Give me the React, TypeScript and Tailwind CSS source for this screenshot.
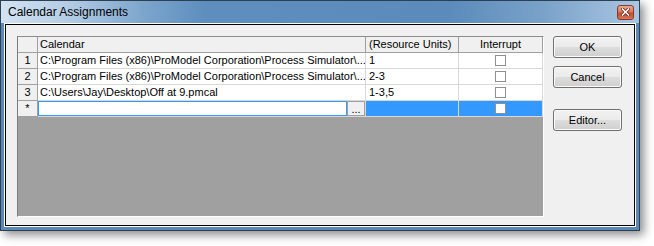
import { Fragment } from 'react';

const rows = [
  { num: '1', calendar: 'C:\\Program Files (x86)\\ProModel Corporation\\Process Simulator\\...', units: '1' },
  { num: '2', calendar: 'C:\\Program Files (x86)\\ProModel Corporation\\Process Simulator\\...', units: '2-3' },
  { num: '3', calendar: 'C:\\Users\\Jay\\Desktop\\Off at 9.pmcal', units: '1-3,5' },
];

const headCell = 'h-[16px] bg-[#f0f0f0] border-r border-b border-[#a0a0a0] leading-[15px] text-black';
const dataCell = 'h-[16px] bg-white border-r border-b border-[#d8d8d8] leading-[15px] text-black';

const CheckBox = () => (
  <div className="w-[11px] h-[11px] border border-[#8e8f8f] bg-white" />
);

const DialogButton = ({ label }: { label: string }) => (
  <button className="w-[69px] h-[22px] rounded-[3px] border border-[#707070] bg-[linear-gradient(to_bottom,#f2f2f2_0%,#ebebeb_48%,#dddddd_52%,#cfcfcf_100%)] shadow-[inset_0_0_0_1px_#fbfbfb] text-[11px] leading-[20px] text-black">
    {label}
  </button>
);

const CloseButton = () => (
  <div className="w-[17px] h-[15px] rounded-[3px] border border-[#8a3a28] bg-[linear-gradient(to_bottom,#e8a891_0%,#d87a5f_45%,#c44b2e_55%,#d8765a_100%)] flex items-center justify-center">
    <svg width="9" height="8" viewBox="0 0 9 8">
      <path d="M1.5 1 L7.5 7 M7.5 1 L1.5 7" stroke="#5a1c10" strokeWidth="3" strokeLinecap="square" />
      <path d="M1.5 1 L7.5 7 M7.5 1 L1.5 7" stroke="#ffffff" strokeWidth="1.6" strokeLinecap="square" />
    </svg>
  </div>
);

export default function App() {
  return (
    <div className="w-[654px] h-[246px] bg-white font-['Liberation_Sans',Arial,sans-serif]">
      <div className="w-[640px] h-[231px] border border-[#2e3f52] bg-[#5b89b7] shadow-[4px_4px_9px_rgba(0,0,0,0.45)] flex flex-col">
        {/* Title bar */}
        <div className="h-[22px] flex items-center justify-between pl-[7px] pr-[5px] bg-[linear-gradient(to_right,#d2e2f1_0%,#b5cee6_10%,#7ea6cd_22%,#5d8ebe_32%,#5a8bbb_70%,#7aa2c9_85%,#a9c6e2_100%)]">
          <span className="text-[12px] text-black leading-none">Calendar Assignments</span>
          <CloseButton />
        </div>

        {/* Frame */}
        <div className="flex-1 px-[3px] pb-[3px]">
          <div className="h-full border border-white">
            <div className="h-full border border-black bg-[#f0f0f0] flex pl-[11px] pt-[11px] pb-[8px] pr-[12px] gap-[9px]">
              {/* Grid */}
              <div className="w-[527px] h-[181px] border-t border-l border-t-[#8c8c8c] border-l-[#7a7a7a] border-b border-r border-b-white border-r-white bg-[#a0a0a0] text-[11px]">
                <div className="grid grid-cols-[20px_328px_93px_84px]">
                  <div className={headCell} />
                  <div className={`${headCell} pl-[2px]`}>Calendar</div>
                  <div className={`${headCell} pl-[3px]`}>(Resource Units)</div>
                  <div className={`${headCell} text-center`}>Interrupt</div>

                  {rows.map((row) => (
                    <Fragment key={row.num}>
                      <div className={`${headCell} text-center`}>{row.num}</div>
                      <div className={`${dataCell} pl-[2px] whitespace-nowrap overflow-hidden`}>{row.calendar}</div>
                      <div className={`${dataCell} pl-[3px]`}>{row.units}</div>
                      <div className={`${dataCell} flex items-center justify-center`}>
                        <CheckBox />
                      </div>
                    </Fragment>
                  ))}

                  {/* New row being edited */}
                  <div className={`${headCell} text-center`}>*</div>
                  <div className="h-[16px] bg-white border-r border-b border-[#d8d8d8] flex">
                    <div className="flex-1 border border-[#3399ff] bg-white" />
                    <div className="w-[18px] h-[15px] border border-[#a0a0a0] bg-[#f0f0f0] flex items-end justify-center text-[11px] leading-[11px]">
                      ...
                    </div>
                  </div>
                  <div className="h-[16px] bg-[#3399ff] border-r border-b border-[#d8d8d8]" />
                  <div className="h-[16px] bg-[#3399ff] border-r border-b border-[#d8d8d8] flex items-center justify-center">
                    <CheckBox />
                  </div>
                </div>
              </div>

              {/* Buttons */}
              <div className="flex flex-col">
                <DialogButton label="OK" />
                <div className="mt-[6px]">
                  <DialogButton label="Cancel" />
                </div>
                <div className="mt-[19px]">
                  <DialogButton label="Editor..." />
                </div>
              </div>
            </div>
          </div>
        </div>
      </div>
    </div>
  );
}
